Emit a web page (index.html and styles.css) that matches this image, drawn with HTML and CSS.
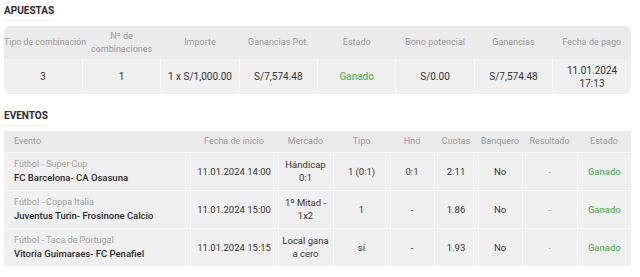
FILE: index.html
```html
<!DOCTYPE html>
<html lang="es">
<head>
<meta charset="utf-8">
<link rel="stylesheet" href="styles.css">
</head>
<body>
<section class="block">
  <h2 class="title">APUESTAS</h2>
  <table class="grid bets">
    <thead>
      <tr>
        <th class="nowrap">Tipo de combinación</th>
        <th>Nº de<br>combinaciones</th>
        <th>Importe</th>
        <th>Ganancias Pot.</th>
        <th>Estado</th>
        <th>Bono potencial</th>
        <th>Ganancias</th>
        <th>Fecha de pago</th>
      </tr>
    </thead>
    <tbody>
      <tr>
        <td>3</td>
        <td>1</td>
        <td>1 x S/1,000.00</td>
        <td>S/7,574.48</td>
        <td class="won">Ganado</td>
        <td>S/0.00</td>
        <td>S/7,574.48</td>
        <td>11.01.2024<br>17:13</td>
      </tr>
    </tbody>
  </table>
</section>
<section class="block events-block">
  <h2 class="title">EVENTOS</h2>
  <table class="grid events">
    <colgroup>
      <col class="c-event"><col class="c-date"><col class="c-market"><col class="c-type"><col class="c-hnd"><col class="c-odds"><col class="c-bank"><col class="c-res"><col class="c-state">
    </colgroup>
    <thead>
      <tr>
        <th class="left">Evento</th>
        <th>Fecha de inicio</th>
        <th>Mercado</th>
        <th>Tipo</th>
        <th>Hnd</th>
        <th>Cuotas</th>
        <th>Banquero</th>
        <th>Resultado</th>
        <th>Estado</th>
      </tr>
    </thead>
    <tbody>
      <tr>
        <td class="left"><div class="league">Fútbol - Super Cup</div><div class="match">FC Barcelona- CA Osasuna</div></td>
        <td>11.01.2024 14:00</td>
        <td>Hándicap<br>0:1</td>
        <td>1 (0:1)</td>
        <td>0:1</td>
        <td>2.11</td>
        <td>No</td>
        <td class="muted">-</td>
        <td class="won">Ganado</td>
      </tr>
      <tr>
        <td class="left"><div class="league">Fútbol - Coppa Italia</div><div class="match">Juventus Turin- Frosinone Calcio</div></td>
        <td>11.01.2024 15:00</td>
        <td>1º Mitad -<br>1x2</td>
        <td>1</td>
        <td>-</td>
        <td>1.86</td>
        <td>No</td>
        <td class="muted">-</td>
        <td class="won">Ganado</td>
      </tr>
      <tr>
        <td class="left"><div class="league">Fútbol - Taca de Portugal</div><div class="match">Vitoria Guimaraes- FC Penafiel</div></td>
        <td>11.01.2024 15:15</td>
        <td>Local gana<br>a cero</td>
        <td>sí</td>
        <td>-</td>
        <td>1.93</td>
        <td>No</td>
        <td class="muted">-</td>
        <td class="won">Ganado</td>
      </tr>
    </tbody>
  </table>
</section>
</body>
</html>
```
FILE: styles.css
```css
* { box-sizing: border-box; }
html, body { margin: 0; padding: 0; background: #fff; }
body {
  font-family: Roboto, "Liberation Sans", sans-serif;
  color: #333;
  padding: 4px 9px 0 4px;
}
.title {
  margin: 0;
  font-size: 10px;
  font-weight: 700;
  color: #2b2b2b;
  line-height: 14px;
  padding-bottom: 2px;
  width: 48px;
  border-bottom: 1px solid #ececec;
  white-space: nowrap;
}
.events-block .title { width: 42px; }
.events-block { margin-top: 15px; }
.grid {
  width: 627px;
  border-collapse: collapse;
  table-layout: fixed;
  margin-top: 5px;
  background: #f0f0f0;
}
.grid th {
  background: #ebebeb;
  color: #9a9a9a;
  font-weight: 400;
  font-size: 9px;
  line-height: 13px;
  text-align: center;
  padding: 0 1px;
}
.grid th.nowrap { white-space: nowrap; font-size: 8.8px; padding: 0; }
.grid td {
  background: #f0f0f0;
  border: 1px solid #fafafa;
  font-size: 10px;
  line-height: 13px;
  text-align: center;
  padding: 0 2px;
  color: #333;
}
.grid tr td:first-child { border-left: none; }
.grid tr td:last-child { border-right: none; }
.grid tbody tr:last-child td { border-bottom: none; }
.bets { border-radius: 6px; overflow: hidden; }
.bets th { height: 33px; }
.bets td { height: 35px; border-top: none; }
.won { color: #5cb85c !important; font-weight: 500; }
.muted { color: #aaa !important; }
.events th { height: 21px; }
.events td { height: 38px; font-size: 9.5px; }
.events .left { text-align: left; padding-left: 10px; }
.league { color: #a3a3a3; font-size: 9px; line-height: 13px; }
.match { color: #2b2b2b; font-weight: 500; font-size: 9.5px; line-height: 14px; }
.c-event { width: 186px; }
.c-date { width: 88px; }
.c-market { width: 55px; }
.c-type { width: 57px; }
.c-hnd { width: 44px; }
.c-odds { width: 44px; }
.c-bank { width: 44px; }
.c-res { width: 55px; }
.c-state { width: 54px; }
```
